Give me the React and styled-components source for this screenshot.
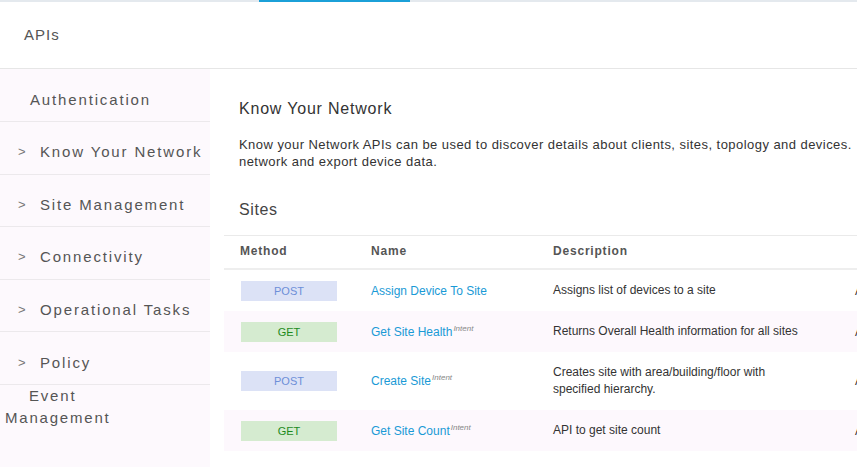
import React from "react";
import styled, { createGlobalStyle } from "styled-components";

const GlobalStyle = createGlobalStyle`
  html, body { margin: 0; padding: 0; background: #ffffff; }
  body { font-family: "Liberation Sans", Arial, sans-serif; }
  * { box-sizing: border-box; }
`;

const Page = styled.div`
  width: 857px;
  height: 467px;
  overflow: hidden;
  background: #fff;
  display: flex;
  flex-direction: column;
`;

const TopStrip = styled.div`
  height: 2px;
  background: #e4e9ee;
  display: flex;
  flex-shrink: 0;
`;

const ActiveTab = styled.div`
  margin-left: 259px;
  width: 151px;
  height: 2px;
  background: #1ba0d8;
`;

const Header = styled.div`
  height: 67px;
  flex-shrink: 0;
  display: flex;
  align-items: center;
  padding-left: 24px;
  padding-bottom: 2px;
  border-bottom: 1px solid #e6e6e6;
  font-size: 15px;
  letter-spacing: 1px;
  color: #555;
`;

const Body = styled.div`
  flex: 1;
  display: flex;
  min-height: 0;
`;

const Sidebar = styled.nav`
  width: 210px;
  flex-shrink: 0;
  background: #fdf9fd;
  display: flex;
  flex-direction: column;
`;

const NavItem = styled.div`
  height: ${(p) => (p.$first ? "53px" : "52.6px")};
  flex-shrink: 0;
  display: flex;
  align-items: center;
  padding-top: 8px;
  padding-left: ${(p) => (p.$plain ? "30px" : "18px")};
  border-bottom: 1px solid #ece9ec;
  font-size: 15px;
  letter-spacing: 1.85px;
  color: #555;
  white-space: nowrap;
`;

const Chevron = styled.span`
  display: inline-block;
  width: 22px;
  font-size: 13px;
  letter-spacing: 0;
  color: #777;
`;

const NavWrapItem = styled.div`
  padding: 0 0 0 5px;
  text-indent: 24px;
  font-size: 15px;
  line-height: 22px;
  letter-spacing: 1.8px;
  color: #555;
`;

const Main = styled.main`
  flex: 1;
  margin-left: 14px;
  min-width: 0;
  overflow: hidden;
`;

const Intro = styled.div`
  padding: 29px 0 0 15px;
`;

const Title = styled.h1`
  margin: 0;
  font-size: 16px;
  font-weight: normal;
  letter-spacing: 0.8px;
  color: #333;
  line-height: 22px;
`;

const Description = styled.p`
  margin: 16px 0 0;
  font-size: 13px;
  letter-spacing: 0.45px;
  line-height: 17px;
  color: #333;
  white-space: nowrap;
`;

const SectionTitle = styled.h2`
  margin: 29px 0 0;
  font-size: 16px;
  font-weight: normal;
  letter-spacing: 0.6px;
  color: #444;
  line-height: 22px;
`;

const Table = styled.div`
  margin-top: 14px;
  width: 700px;
`;

const Row = styled.div`
  display: grid;
  grid-template-columns: 131px 182px 302px 1fr;
  align-items: center;
  padding-left: 16px;
  min-height: ${(p) => p.$h}px;
  background: ${(p) => (p.$alt ? "#fdf8fd" : "#fff")};
  white-space: nowrap;
`;

const HeadRow = styled(Row)`
  border-top: 1px solid #eaeaea;
  border-bottom: 2px solid #eeeeee;
  padding-bottom: 3px;
  font-size: 12px;
  font-weight: bold;
  letter-spacing: 0.8px;
  color: #555;
`;

const Badge = styled.span`
  display: flex;
  align-items: center;
  justify-content: center;
  margin-left: 1px;
  width: 96px;
  height: 20px;
  font-size: 11px;
  background: ${(p) => (p.$method === "GET" ? "#d5ebd0" : "#dce2f6")};
  color: ${(p) => (p.$method === "GET" ? "#1d8a1d" : "#6e8fd8")};
`;

const NameLink = styled.a`
  font-size: 12px;
  line-height: 16px;
  color: #1a9ad6;
  text-decoration: none;
`;

const Sup = styled.sup`
  font-size: 8px;
  line-height: 0;
  font-style: italic;
  color: #888;
  margin-left: 1px;
`;

const Desc = styled.span`
  font-size: 12px;
  line-height: 17px;
  color: #333;
  white-space: normal;
`;

const Extra = styled.span`
  font-size: 12px;
  color: #333;
`;

const navItems = [
  "Know Your Network",
  "Site Management",
  "Connectivity",
  "Operational Tasks",
  "Policy",
];

const rows = [
  { method: "POST", name: "Assign Device To Site", intent: false, desc: "Assigns list of devices to a site", h: 41 },
  { method: "GET", name: "Get Site Health", intent: true, desc: "Returns Overall Health information for all sites", h: 41 },
  { method: "POST", name: "Create Site", intent: true, desc: ["Creates site with area/building/floor with", "specified hierarchy."], h: 58 },
  { method: "GET", name: "Get Site Count", intent: true, desc: "API to get site count", h: 41 },
];

export default function App() {
  return (
    <>
      <GlobalStyle />
      <Page>
        <TopStrip>
          <ActiveTab />
        </TopStrip>
        <Header>APIs</Header>
        <Body>
          <Sidebar>
            <NavItem $plain $first>Authentication</NavItem>
            {navItems.map((n) => (
              <NavItem key={n}>
                <Chevron>&gt;</Chevron>
                {n}
              </NavItem>
            ))}
            <NavWrapItem>
              Event
              <br />
              Management
            </NavWrapItem>
          </Sidebar>
          <Main>
            <Intro>
              <Title>Know Your Network</Title>
              <Description>
                Know your Network APIs can be used to discover details about clients, sites, topology and devices.
                <br />
                network and export device data.
              </Description>
              <SectionTitle>Sites</SectionTitle>
            </Intro>
            <Table>
              <HeadRow $h={35}>
                <span>Method</span>
                <span>Name</span>
                <span>Description</span>
                <span />
              </HeadRow>
              {rows.map((r, i) => (
                <Row key={r.name} $h={r.h} $alt={i % 2 === 1}>
                  <Badge $method={r.method}>{r.method}</Badge>
                  <NameLink href="#">
                    {r.name}
                    {r.intent && <Sup>Intent</Sup>}
                  </NameLink>
                  <Desc>
                    {Array.isArray(r.desc) ? (
                      <>
                        {r.desc[0]}
                        <br />
                        {r.desc[1]}
                      </>
                    ) : (
                      r.desc
                    )}
                  </Desc>
                  <Extra>A</Extra>
                </Row>
              ))}
            </Table>
          </Main>
        </Body>
      </Page>
    </>
  );
}
